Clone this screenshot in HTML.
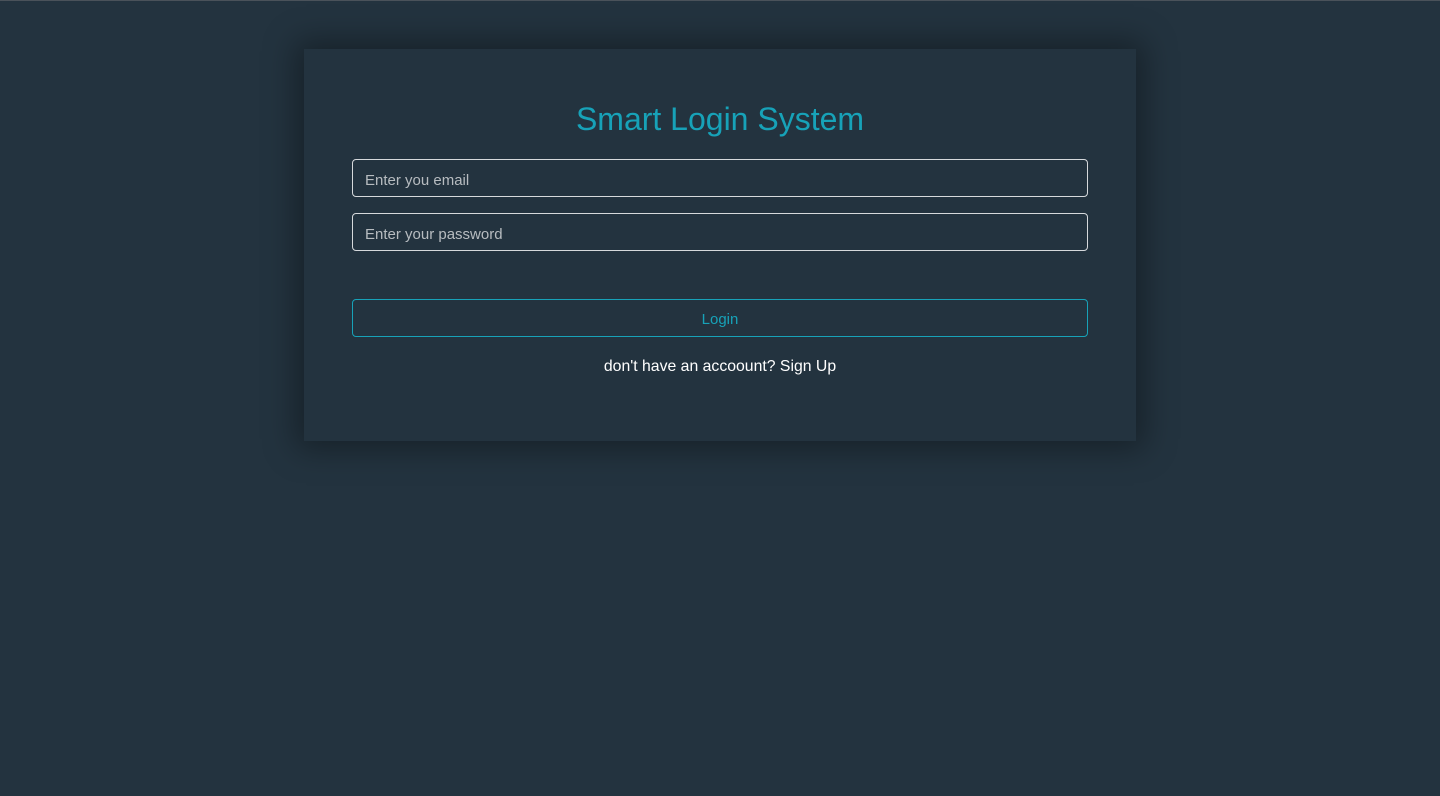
<!DOCTYPE html>
<html><head><style>
html,body{margin:0;padding:0;width:1440px;height:796px;background:#23333f;overflow:hidden;font-family:"Liberation Sans",sans-serif;}
body{border-top:1px solid #4a525a;box-sizing:border-box;}
.card{position:absolute;left:304px;top:49px;width:832px;height:392px;background:#23333f;box-shadow:0 0 30px 8px rgba(0,0,0,0.35);}
h1{position:absolute;left:0;right:0;top:99px;margin:0;text-align:center;color:#17a2b8;font-size:32px;font-weight:normal;line-height:40px;}
.inp{position:absolute;left:352px;border:1px solid #d6d9dc;border-radius:4px;color:#b7bcc0;font-size:15px;line-height:41px;padding-left:12px;box-sizing:border-box;width:736px;height:38px;}
.btn{position:absolute;left:352px;top:299px;width:736px;height:38px;border:1px solid #17a2b8;border-radius:4px;box-sizing:border-box;color:#17a2b8;text-align:center;line-height:40px;font-size:15px;}
.su{position:absolute;left:0;right:0;top:357px;text-align:center;color:#fff;font-size:15.8px;line-height:20px;}
</style></head><body>
<div class="card"></div>
<h1>Smart Login System</h1>
<div class="inp" style="top:159px">Enter you email</div>
<div class="inp" style="top:213px">Enter your password</div>
<div class="btn">Login</div>
<div class="su">don't have an accoount? Sign Up</div>
</body></html>
